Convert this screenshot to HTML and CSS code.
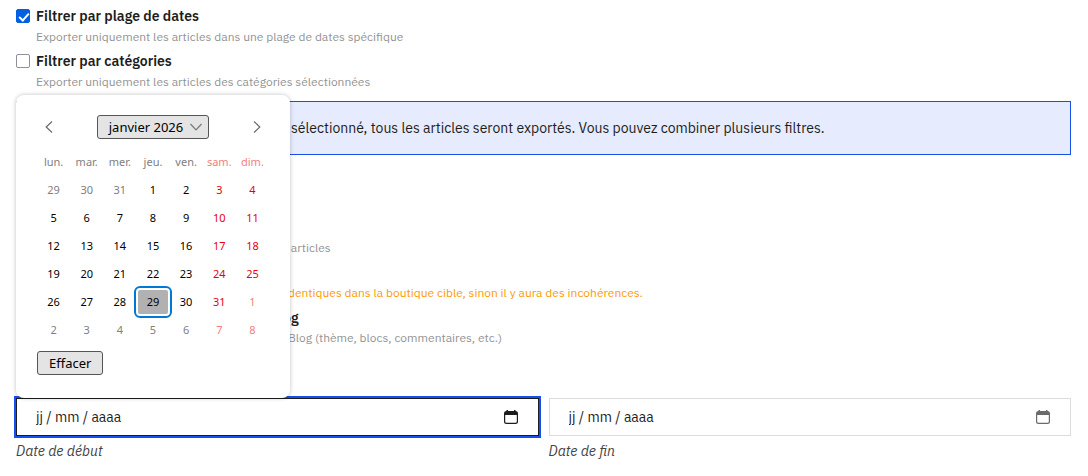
FILE: index.html
```
<!DOCTYPE html>
<html lang="fr">
<head>
  <meta charset="UTF-8" />
  <meta name="viewport" content="width=device-width, initial-scale=1.0"/>
  <title>Export des articles</title>
  <link rel="stylesheet" href="styles.css">
</head>
<body>

  <form class="export-form">
    <!-- Filters -->
    <div class="option">
      <input type="checkbox" id="filter-dates" checked>
      <label for="filter-dates">Filtrer par plage de dates</label>
      <p class="hint">Exporter uniquement les articles dans une plage de dates spécifique</p>
    </div>
    <div class="option">
      <input type="checkbox" id="filter-categories">
      <label for="filter-categories">Filtrer par catégories</label>
      <p class="hint">Exporter uniquement les articles des catégories sélectionnées</p>
    </div>

    <div class="alert">sélectionné, tous les articles seront exportés. Vous pouvez combiner plusieurs filtres.</div>

    <!-- Content options -->
    <div class="notes">
      <p class="note">&nbsp;articles</p>
      <p class="note warning">dentiques dans la boutique cible, sinon il y aura des incohérences.</p>
      <h3>og</h3>
      <p class="note">Blog (thème, blocs, commentaires, etc.)</p>
    </div>

    <!-- Date range -->
    <div class="date-range">
      <div class="field">
        <div class="date-box active">
          <input type="text" id="date-start" placeholder="jj / mm / aaaa">
          <button type="button" class="icon-btn" aria-label="Ouvrir le calendrier">
            <svg viewBox="0 0 14 14" width="14" height="14"><path d="M2.500 0H4v1h6V0h1.500v1a2.500 2.500 0 0 1 2.500 2.500v8a2.500 2.500 0 0 1-2.500 2.500h-9A2.500 2.500 0 0 1 0 11.500v-8A2.500 2.500 0 0 1 2.500 1zM1.200 5v6.500a1.300 1.300 0 0 0 1.300 1.300h9a1.300 1.300 0 0 0 1.300-1.300V5z" fill="currentColor" fill-rule="evenodd"/></svg>
          </button>

          <div class="picker">
            <div class="picker-head">
              <button type="button" class="icon-btn" aria-label="Mois précédent">
                <svg viewBox="0 0 8 12" width="8" height="12"><path d="M7 .5 1.200 6 7 11.500" fill="none" stroke="currentColor" stroke-width="1.200"/></svg>
              </button>
              <button type="button" class="picker-btn month-btn">janvier 2026
                <svg viewBox="0 0 12 8" width="12" height="8"><path d="M.5 1 6 6.800 11.500 1" fill="none" stroke="#777" stroke-width="1.200"/></svg>
              </button>
              <button type="button" class="icon-btn" aria-label="Mois suivant">
                <svg viewBox="0 0 8 12" width="8" height="12"><path d="M1 .5 6.800 6 1 11.500" fill="none" stroke="currentColor" stroke-width="1.200"/></svg>
              </button>
            </div>
            <table>
              <thead>
                <tr><th>lun.</th><th>mar.</th><th>mer.</th><th>jeu.</th><th>ven.</th><th>sam.</th><th>dim.</th></tr>
              </thead>
              <tbody>
                <tr><td class="out">29</td><td class="out">30</td><td class="out">31</td><td>1</td><td>2</td><td>3</td><td>4</td></tr>
                <tr><td>5</td><td>6</td><td>7</td><td>8</td><td>9</td><td>10</td><td>11</td></tr>
                <tr><td>12</td><td>13</td><td>14</td><td>15</td><td>16</td><td>17</td><td>18</td></tr>
                <tr><td>19</td><td>20</td><td>21</td><td>22</td><td>23</td><td>24</td><td>25</td></tr>
                <tr><td>26</td><td>27</td><td>28</td><td><button type="button" class="today">29</button></td><td>30</td><td>31</td><td class="out">1</td></tr>
                <tr><td class="out">2</td><td class="out">3</td><td class="out">4</td><td class="out">5</td><td class="out">6</td><td class="out">7</td><td class="out">8</td></tr>
              </tbody>
            </table>
            <button type="button" class="picker-btn">Effacer</button>
          </div>
        </div>
        <label for="date-start">Date de début</label>
      </div>

      <div class="field">
        <div class="date-box">
          <input type="text" id="date-end" placeholder="jj / mm / aaaa">
          <button type="button" class="icon-btn" aria-label="Ouvrir le calendrier">
            <svg viewBox="0 0 14 14" width="14" height="14"><path d="M2.500 0H4v1h6V0h1.500v1a2.500 2.500 0 0 1 2.500 2.500v8a2.500 2.500 0 0 1-2.500 2.500h-9A2.500 2.500 0 0 1 0 11.500v-8A2.500 2.500 0 0 1 2.500 1zM1.200 5v6.500a1.300 1.300 0 0 0 1.300 1.300h9a1.300 1.300 0 0 0 1.300-1.300V5z" fill="currentColor" fill-rule="evenodd"/></svg>
          </button>
        </div>
        <label for="date-end">Date de fin</label>
      </div>
    </div>
  </form>

</body>
</html>
```
FILE: styles.css
```
/* Global Styles */
* {
  box-sizing: border-box;
  margin: 0;
  padding: 0;
}

body {
  background: #fff;
  color: #1d1d1b;
  font-family: 'IBM Plex Sans', Roboto, sans-serif;
  font-size: 14px;
  line-height: 20px;
}

button,
input {
  font: inherit;
  color: inherit;
}

.export-form {
  padding: 6px 17px 12px 16px;
}

/* Filters */
.option {
  display: grid;
  grid-template-columns: 14px 1fr;
  column-gap: 6px;
  align-items: center;
  height: 45px;
  grid-template-rows: 20px 22px;
  align-content: start;
}

.option input {
  appearance: none;
  width: 14px;
  height: 14px;
  border: 1px solid #8f8f9d;
  border-radius: 2px;
}

.option input:checked {
  border-color: #0060df;
  background: #0060df;
  position: relative;
}

.option input:checked::after {
  content: '';
  position: absolute;
  left: 4px;
  top: 1px;
  width: 4px;
  height: 8px;
  border: solid #fff;
  border-width: 0 2px 2px 0;
  transform: rotate(42deg);
}

.option label {
  font-weight: 600;
}

.hint,
.note {
  color: #939393;
  font-size: 12px;
}

.hint {
  grid-column: 2;
}

.alert {
  margin: 5px 0 83px;
  padding: 16px 16px 16px 274px;
  border: 1px solid #1450e6;
  background: #e6ecfd;
}

/* Content options */
.notes {
  padding-left: 272px;
}

.note {
  margin-bottom: 25px;
}

.notes .warning {
  color: #ff9a00;
  margin-bottom: 5px;
}

.notes h3 {
  margin-left: -5px;
  font-size: 14px;
  font-weight: 600;
}

.notes h3 + .note {
  margin-bottom: 50px;
}

/* Date range */
.date-range {
  display: grid;
  grid-template-columns: 1fr 1fr;
  gap: 10px;
}

.date-box {
  position: relative;
  display: flex;
  align-items: center;
  height: 38px;
  padding: 0 20px 0 19px;
  margin-bottom: 5px;
  border: 1px solid #dcdcdc;
}

.date-box.active {
  border-color: #1d1d1b;
  outline: 2px solid #1450f0;
}

.date-box input {
  flex: 1;
  min-width: 0;
  border: none;
  outline: none;
  background: transparent;
}

.date-box input::placeholder {
  color: #1d1d1b;
}

.icon-btn {
  display: flex;
  border: none;
  background: none;
  color: #6b6b6b;
  cursor: pointer;
}

.active > .icon-btn {
  color: #1d1d1b;
}

.field label {
  display: block;
  font-style: italic;
  color: #444;
  font-size: 14px;
}

/* Calendar popup */
.picker {
  position: absolute;
  bottom: calc(100% + 1px);
  left: -1px;
  width: 274px;
  padding: 20px 21px 23px;
  border-radius: 8px;
  background: #fff;
  box-shadow: 0 0 4px rgba(0, 0, 0, 0.25);
  color: #000;
  font-family: 'Segoe UI', 'Noto Sans', sans-serif;
  font-size: 13px;
}

.picker-head {
  display: flex;
  justify-content: space-between;
  align-items: center;
  padding: 0 8px;
  margin-bottom: 9px;
}

.picker-btn {
  display: flex;
  align-items: center;
  gap: 7px;
  height: 24px;
  padding: 0 11px;
  border: 1px solid #555;
  border-radius: 3px;
  background: #e4e4e4;
  cursor: pointer;
}

.month-btn {
  padding-right: 6px;
}

.picker table {
  width: 100%;
  margin-bottom: 7px;
  border-collapse: collapse;
  table-layout: fixed;
  font-size: 11px;
  text-align: center;
}

.picker th,
.picker td {
  height: 28px;
  font-weight: normal;
}

.picker th,
.out {
  color: #808080;
}

.picker td:nth-child(n+6) {
  color: #e60012;
}

.picker th:nth-child(n+6),
.picker td.out:nth-child(n+6) {
  color: #f28080;
}

.today {
  width: 30px;
  height: 24px;
  border: none;
  border-radius: 2px;
  background: #b1b1b1;
  outline: 2px solid #0078d7;
  outline-offset: 2px;
  vertical-align: middle;
}
```
